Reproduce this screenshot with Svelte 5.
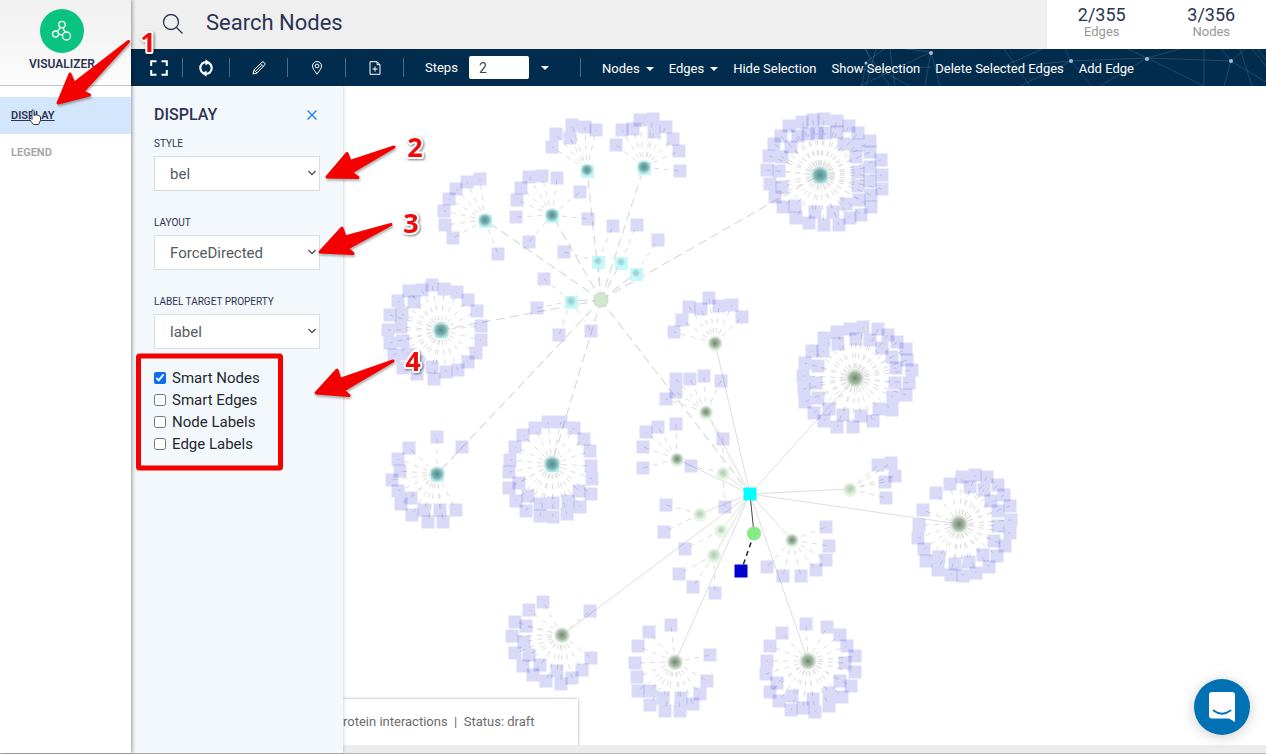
<script lang="ts">
  type Cluster = { x: number; y: number; r: number; kind: 'teal' | 'olive'; leaves: string };

  // Hub position, strength of the hub's dark core, family, and leaf positions.
  const clusters: Cluster[] = [
    { x: 587, y: 170, r: 7, kind: 'teal', leaves: '572,125 585,127 596,130 556,134 570,138 552,147' },
    { x: 644, y: 167, r: 8, kind: 'teal', leaves: '622,130 633,129 640,120 653,119 654,132 666,127 673,139 679,151 680,171 616,145' },
    { x: 485, y: 220, r: 8, kind: 'teal', leaves: '480,179 467,182 456,189 449,199 444,211 445,225 453,238 498,254' },
    { x: 552, y: 215, r: 8, kind: 'teal', leaves: '529,177 542,176 557,178 521,188 517,200 516,217 529,242 580,192 588,219' },
    { x: 598, y: 261, r: 3, kind: 'teal', leaves: '564,252 613,226' },
    { x: 621, y: 262, r: 3, kind: 'teal', leaves: '637,225' },
    { x: 636, y: 273, r: 3, kind: 'teal', leaves: '658,240' },
    { x: 571, y: 301, r: 4, kind: 'teal', leaves: '544,279 537,308 559,335 591,331' },
    { x: 441, y: 330, r: 10, kind: 'teal', leaves: '432,285 409,291 422,290 444,289 457,292 468,300 414,302 398,301 477,311 402,314 390,315 481,326 401,327 388,330 481,340 403,341 390,343 476,353 468,362 458,370 446,372 434,379 432,367 417,374 403,368 394,355 407,354 418,362' },
    { x: 820, y: 175, r: 11, kind: 'teal', leaves: '824,119 813,120 802,122 837,121 789,126 849,126 858,133 781,136 870,141 774,144 791,147 798,136 808,134 817,133 825,133 837,132 844,144 857,145 870,152 856,157 881,160 769,156 782,157 870,167 858,172 882,175 870,181 858,186 882,189 871,195 767,170 779,171 770,184 782,187 775,197 783,207 795,206 871,207 859,200 846,204 815,212 833,212 796,218 809,223 824,225 839,225 850,218 861,215' },
    { x: 437, y: 474, r: 9, kind: 'teal', leaves: '437,437 462,447 409,448 398,459 400,471 392,480 398,491 411,498 401,504 412,515 424,510 440,510 456,510 428,522 443,522' },
    { x: 552, y: 464, r: 10, kind: 'teal', leaves: '548,422 561,422 535,428 574,428 523,435 584,439 515,447 590,451 510,460 591,466 509,472 592,479 519,483 509,488 579,491 591,494 528,496 516,501 540,504 553,503 568,501 580,507 526,511 540,516 553,517 567,514' },
    { x: 715, y: 343, r: 8, kind: 'olive', leaves: '709,298 689,307 701,309 719,306 732,305 742,317 682,320 674,332' },
    { x: 706, y: 412, r: 7, kind: 'olive', leaves: '676,379 690,379 704,376 721,381 676,392 666,399 723,439' },
    { x: 855, y: 378, r: 11, kind: 'olive', leaves: '863,327 850,329 878,329 837,332 824,338 856,339 870,340 888,335 838,344 897,342 882,348 823,351 812,351 906,349 892,357 907,360 805,363 818,366 896,368 912,370 803,376 895,383 909,383 816,383 804,389 906,395 893,397 818,398 805,402 829,409 814,413 843,415 861,416 879,409 892,410 824,421 837,427 853,427 873,421' },
    { x: 562, y: 635, r: 9, kind: 'olive', leaves: '543,602 590,611 529,610 515,622 526,626 512,636 524,642 515,653 529,655 591,658 523,666 540,665 533,675 557,671 582,670 546,681 572,678 561,684' },
    { x: 677, y: 459, r: 7, kind: 'olive', leaves: '676,424 658,427 646,432 643,447 643,468 691,466' },
    { x: 723, y: 473, r: 4, kind: 'olive', leaves: '725,507 691,466 723,439' },
    { x: 700, y: 514, r: 4, kind: 'olive', leaves: '666,505 664,532' },
    { x: 721, y: 530, r: 3, kind: 'olive', leaves: '685,549' },
    { x: 714, y: 555, r: 5, kind: 'olive', leaves: '679,574 693,587 715,593' },
    { x: 792, y: 540, r: 7, kind: 'olive', leaves: '826,527 829,546 826,560 816,570 801,576 783,576 767,567' },
    { x: 850, y: 489, r: 5, kind: 'olive', leaves: '878,465 891,463 895,476 885,482 886,498' },
    { x: 959, y: 524, r: 11, kind: 'olive', leaves: '936,493 950,484 962,477 975,475 987,477 970,487 984,490 998,485 991,501 1004,495 998,511 1010,506 1011,520 998,526 1010,533 994,541 1005,546 997,556 983,555 989,567 969,562 955,564 976,573 963,576 951,575 939,557 938,570 926,561 924,549 918,538 919,525 923,510' },
    { x: 675, y: 662, r: 9, kind: 'olive', leaves: '671,625 649,632 638,646 635,663 710,655 637,677 638,691 650,691 707,681 700,694 663,698 681,698 650,705 665,711 680,711 693,704' },
    { x: 808, y: 661, r: 10, kind: 'olive', leaves: '806,624 827,627 782,633 840,635 770,646 847,646 855,656 767,661 845,663 855,672 766,674 777,683 840,681 851,686 770,692 792,696 813,699 829,693 842,697 779,701 791,710 803,708 815,712 829,706' },
  ];

  const graph = clusters.map((c) => ({
    ...c,
    points: c.leaves.split(' ').map((p) => p.split(',').map(Number)),
  }));
  // A leaf may hang from more than one hub; it is drawn once.
  const leaves = [...new Set(clusters.flatMap((c) => c.leaves.split(' ')))].map((p) => p.split(',').map(Number));
  const root = { x: 601, y: 300 };
  const focus = { x: 750, y: 494 };

  const fields = [
    { id: 'style', label: 'STYLE', options: ['bel'] },
    { id: 'layout', label: 'LAYOUT', options: ['ForceDirected'] },
    { id: 'target', label: 'LABEL TARGET PROPERTY', options: ['label'] },
  ];

  let toggles = $state([
    { label: 'Smart Nodes', on: true },
    { label: 'Smart Edges', on: false },
    { label: 'Node Labels', on: false },
    { label: 'Edge Labels', on: false },
  ]);
  let steps = $state('2');
</script>

<div class="app">
  <aside class="sidebar">
    <div class="brand">
      <span class="logo">
        <svg width="44" height="44" viewBox="0 0 44 44" fill="none" stroke="#fff" stroke-width="1.3">
          <circle cx="22" cy="15.500" r="3.200" />
          <circle cx="15.500" cy="25" r="3" />
          <circle cx="26.500" cy="27" r="4" />
          <path d="M20.600 18.500l-3.500 4M23 18.700l2 4.500M18.500 25.200l4 1" />
        </svg>
      </span>
      <strong>VISUALIZER</strong>
    </div>
    <nav>
      <a class="current" href="#display">DISPLAY</a>
      <a href="#legend">LEGEND</a>
    </nav>
  </aside>

  <div class="main">
    <header class="search">
      <svg width="22" height="22" viewBox="0 0 22 22" fill="none" stroke="#2c3354" stroke-width="1.300">
        <circle cx="9" cy="8" r="7.500" /><path d="M14.500 13.500L20.500 19.500" />
      </svg>
      <input type="text" aria-label="Search Nodes" placeholder="Search Nodes" />
      <div class="stats">
        <div><b>2/355</b><span>Edges</span></div>
        <div><b>3/356</b><span>Nodes</span></div>
      </div>
    </header>

    <div class="toolbar">
      <svg class="net" width="440" height="37" viewBox="826 49 440 37" fill="none" stroke="#8fb3cc" stroke-opacity=".22" aria-hidden="true">
        <path d="M860 86L931 52M931 52L925 86M931 52L940 86M931 52L906 49M865 49L890 86M866 62L884 49M866 62L862 86M876 49L866 86M890 49L895 86M910 86L872 66L866 49M931 67L850 70M1004 49L1030 86M1071 61L1000 68M1000 68L1042 49M1071 61L1065 49M1071 61L1092 86M1071 61L1147 58M1071 61L1020 86M1147 58L1128 49M1147 58L1180 49M1147 58L1231 61M1147 58L1204 86M1147 58L1100 86M1231 61L1224 86M1231 61L1221 49M1231 61L1266 82M1204 49V86M1240 49L1252 86M1231 61L1245 49M1252 49L1266 66M1258 49L1266 60" />
        <g fill="#a5bfd3" stroke="none"><circle cx="931" cy="53" r="2" /><circle cx="1071" cy="61" r="2" /><circle cx="1147" cy="59" r="2" /><circle cx="1231" cy="61" r="2" /><circle cx="866" cy="63" r="1.500" /></g>
      </svg>
      <button class="cell wide" aria-label="Full screen">
        <svg width="18" height="16" viewBox="0 0 18 16" fill="none" stroke="#fff" stroke-width="2"><path d="M1.200 6V1.200H6.500M11.500 1.200h5.300V6M16.800 10v4.800h-5.300M6.500 14.800H1.200V10" /></svg>
      </button>
      <button class="cell mid" aria-label="Refresh">
        <svg width="18" height="18" viewBox="0 0 18 18" fill="none" stroke="#fff" stroke-width="2.200"><path d="M6.500 14.200A6 6 0 0 1 5 4.700Q7 3.100 9.500 3.200M11.500 3.800A6 6 0 0 1 13 13.300Q11 14.900 8.500 14.800" /><path d="M8.500.200L13 3.400 8.500 6.600zM9.500 11.400L5 14.600 9.500 17.800z" fill="#fff" stroke="none" /></svg>
      </button>
      <button class="cell" aria-label="Edit">
        <svg width="14" height="14" viewBox="0 0 14 14" fill="none" stroke="#fff"><path d="M1 13l1-4L10 1.200q1-.9 2 .1l.7.700q.9 1 0 1.900L5 12zM2 9l3 3M8.500 2.800l2.900 2.900M4 10l5.500-5.500" /></svg>
      </button>
      <button class="cell" aria-label="Locate">
        <svg width="12" height="14" viewBox="0 0 12 14" fill="none" stroke="#fff"><path d="M6 13.300C3.500 9.500 1.500 7.500 1.500 5a4.500 4.500 0 0 1 9 0c0 2.500-2 4.500-4.500 8.300z" /><circle cx="6" cy="5" r="1.900" /></svg>
      </button>
      <button class="cell" aria-label="Add page">
        <svg width="12" height="14" viewBox="0 0 12 14" fill="none" stroke="#fff"><path d="M1 .700h7L11 3.700v9.600H1zM8 .700v3h3M6 5.500v5M3.500 8h5" /></svg>
      </button>
      <div class="steps">
        <label for="steps">Steps</label>
        <input id="steps" type="text" bind:value={steps} />
        <button aria-label="Step options"><i class="caret"></i></button>
      </div>
      <div class="actions">
        <button>Nodes<i class="caret"></i></button>
        <button>Edges<i class="caret"></i></button>
        <button>Hide Selection</button>
        <button>Show Selection</button>
        <button>Delete Selected Edges</button>
        <button>Add Edge</button>
      </div>
    </div>

    <div class="workspace">
      <section class="panel" aria-label="Display">
        <div class="title">
          <h2>DISPLAY</h2>
          <button aria-label="Close">
            <svg width="10" height="10" viewBox="0 0 10 10" stroke="#1a82f0" stroke-width="1.400"><path d="M.500.500l9 9M9.500.500l-9 9" /></svg>
          </button>
        </div>
        {#each fields as f}
          <div class="field">
            <label for={f.id}>{f.label}</label>
            <div class="pick">
              <select id={f.id}>
                {#each f.options as o}<option>{o}</option>{/each}
              </select>
              <svg width="8" height="6" viewBox="0 0 8 6" fill="none" stroke="#444" stroke-width="1.200"><path d="M.500 1L4 4.600 7.500 1" /></svg>
            </div>
          </div>
        {/each}
        <div class="toggles">
          {#each toggles as t}
            <label><input type="checkbox" bind:checked={t.on} />{t.label}</label>
          {/each}
        </div>
      </section>

      <div class="canvas">
        <svg class="graph" aria-label="Network graph">
          <defs>
            <radialGradient id="teal"><stop offset="0" stop-color="#437f80" stop-opacity=".9" /><stop offset=".5" stop-color="#5d9696" stop-opacity=".7" /><stop offset="1" stop-color="#9fd0d0" stop-opacity="0" /></radialGradient>
            <radialGradient id="olive"><stop offset="0" stop-color="#667766" stop-opacity=".9" /><stop offset=".5" stop-color="#829782" stop-opacity=".65" /><stop offset="1" stop-color="#b5cdb5" stop-opacity="0" /></radialGradient>
          </defs>
          <g transform="translate(-343 -86)">
            {#each graph as c}
              {#if c.kind === 'teal'}
                <line class="long" x1={root.x} y1={root.y} x2={c.x} y2={c.y} />
              {:else}
                <line class="solid" x1={focus.x} y1={focus.y} x2={c.x} y2={c.y} />
              {/if}
            {/each}
            <line class="long" x1={root.x} y1={root.y} x2={focus.x} y2={focus.y} />
            {#each graph as c}
              {#each c.points as [x, y]}
                <line class="spoke" x1={c.x} y1={c.y} x2={x} y2={y} />
              {/each}
            {/each}
            {#each leaves as [x, y]}
              <rect class="leaf" x={x - 6.5} y={y - 6.5} width="13" height="13" />
            {/each}
            {#each graph as c}
              {#if c.kind === 'teal'}
                <rect class="cyan" x={c.x - 6} y={c.y - 5} width="13" height="13" />
              {:else}
                <circle class="green" cx={c.x} cy={c.y + 1} r="7" />
              {/if}
              <circle cx={c.x} cy={c.y} r={c.r < 6 ? c.r + 2 : c.r} fill="url(#{c.kind})" opacity={c.r < 6 ? 0.4 : 1} />
            {/each}
            <circle cx={root.x} cy={root.y} r="7" fill="#d2e8ce" stroke="#c3d6c0" />
            <path d="M750 494L754 534" stroke="#444" />
            <path d="M754 534L741 571" stroke="#222" stroke-width="1.500" stroke-dasharray="5 4" />
            <rect x="743.500" y="487.500" width="13" height="13" fill="#00ffff" />
            <circle cx="754" cy="533.500" r="7" fill="#86ea86" />
            <rect x="734.500" y="564.500" width="13" height="13" fill="#0000cd" />
          </g>
        </svg>
        <div class="status">rotein interactions&nbsp; |&nbsp; Status: draft</div>
      </div>
    </div>
  </div>

  <button class="chat" aria-label="Open chat">
    <svg width="28" height="32" viewBox="0 0 28 32"><path d="M4 1h20q3 0 3 3v27l-6-3.500H4q-3 0-3-3V4q0-3 3-3z" fill="#fff" /><path d="M5.500 19.500q8.500 6.500 17 0" fill="none" stroke="#0071b2" stroke-width="1.800" stroke-linecap="round" /></svg>
  </button>

  <svg class="notes" aria-hidden="true">
    <g class="arrows">
      <path d="M58 103L70 74L74 83.500L128.500 41.500L82.500 92L89.500 95z" />
      <path d="M327 177L347 153.500L350 161.500L394 147L351 172.500L358 177.500z" />
      <path d="M320 252L342 228L345 237L391 224.500L347 248.500L353 253.500z" />
      <path d="M316 393L337 370L340 379.500L393 361L343 390.500L349 395.500z" />
    </g>
    <rect x="138.500" y="356" width="142" height="112" rx="1" fill="none" stroke="#f40000" stroke-width="5" />
    <g class="digits">
      <text x="148" y="52">1</text>
      <text x="415" y="157">2</text>
      <text x="411" y="233">3</text>
      <text x="413" y="371">4</text>
    </g>
    <path d="M32 110.500q1.500-1.500 2 0v5l1-.500q1.200-.800 2 .300q1.500-.600 2 .700q1.500-.300 1.500 1v3.500l-2 4h-5l-4-5q-.500-1.500 1.500-1l1 1z" fill="#fff" stroke="#223" stroke-width=".9" />
  </svg>
</div>

<style>
  :global(body) {
    margin: 0;
    background: #fff;
  }
  .app {
    position: relative;
    display: flex;
    min-height: 100vh;
    box-sizing: border-box;
    border-bottom: 1px solid #b4b4b4;
    font-family: Roboto, sans-serif;
    color: #2c3354;
  }
  button {
    border: 0;
    padding: 0;
    background: none;
    color: inherit;
    font: inherit;
    cursor: pointer;
  }
  .sidebar {
    position: relative;
    z-index: 3;
    flex: 0 0 131px;
    background: #fff;
    box-shadow: 1px 0 4px rgba(0, 0, 0, 0.4);
  }
  .brand {
    display: flex;
    flex-direction: column;
    align-items: center;
    height: 86px;
    box-sizing: border-box;
    padding: 9px 7px 0 0;
    border-bottom: 1px solid #c4c4c4;
    background: linear-gradient(#f0f0f0, #fcfcfc);
  }
  .logo {
    width: 44px;
    height: 44px;
    border-radius: 50%;
    background: #0bc380;
  }
  .brand strong {
    margin-top: 2px;
    font-size: 12px;
    line-height: 18px;
    font-weight: 600;
  }
  nav {
    padding-top: 11px;
  }
  nav a {
    display: block;
    padding-left: 11px;
    font-size: 11px;
    line-height: 37px;
    font-weight: 600;
    color: #a3a3a3;
    text-decoration: none;
  }
  nav a.current {
    background: #d3e6fb;
    color: #2c3354;
    text-decoration: underline;
  }
  .main {
    flex: 1;
    min-width: 0;
    display: flex;
    flex-direction: column;
  }
  .search {
    display: flex;
    align-items: center;
    height: 49px;
    padding-left: 31px;
    background: #efefef;
  }
  .search input {
    flex: 1;
    min-width: 0;
    margin-left: 22px;
    padding: 0 0 4px;
    border: 0;
    background: none;
    outline: 0;
    font: 22px/28px Roboto, sans-serif;
  }
  .search input::placeholder {
    color: #2c3354;
    opacity: 1;
  }
  .search > svg {
    flex: none;
  }
  .stats {
    flex: 0 0 219px;
    display: grid;
    grid-template-columns: 1fr 1fr;
    align-self: stretch;
    background: #fff;
    text-align: center;
  }
  .stats b,
  .stats span {
    display: block;
  }
  .stats b {
    margin-top: 5px;
    font-size: 18px;
    line-height: 20px;
    font-weight: 400;
  }
  .stats span {
    font-size: 13px;
    line-height: 13px;
    color: #979797;
  }
  .toolbar {
    position: relative;
    display: flex;
    align-items: center;
    height: 37px;
    background: #022c4d;
    color: #fff;
    font-size: 13px;
  }
  .net {
    position: absolute;
    right: 0;
    top: 0;
  }
  .cell {
    display: flex;
    align-items: center;
    justify-content: center;
    flex: 0 0 58px;
    box-sizing: border-box;
    height: 19px;
    border-right: 1px solid #4d6b83;
  }
  .cell.wide {
    flex-basis: 52px;
    padding-left: 4px;
  }
  .cell.mid {
    flex-basis: 47px;
  }
  .steps {
    display: flex;
    align-items: center;
    flex: 0 0 177px;
    box-sizing: border-box;
    height: 19px;
    padding-left: 21px;
    border-right: 1px solid #4d6b83;
  }
  .steps label {
    flex: 0 0 44px;
  }
  .steps input {
    width: 60px;
    height: 23px;
    box-sizing: border-box;
    padding: 0 10px;
    border: 0;
    border-radius: 2px;
    background: #fff;
    color: #444;
    font: 14px Roboto, sans-serif;
  }
  .steps .caret {
    margin-left: 12px;
  }
  .caret {
    display: inline-block;
    margin-left: 6px;
    border: 4px solid transparent;
    border-top-color: #fff;
    border-bottom: 0;
    vertical-align: 2px;
  }
  .actions {
    position: relative;
    display: flex;
    gap: 15px;
    padding: 2px 0 0 21px;
    white-space: nowrap;
  }
  .workspace {
    flex: 1;
    display: flex;
  }
  .panel {
    position: relative;
    z-index: 2;
    flex: 0 0 212px;
    box-sizing: border-box;
    padding: 19px 23px 18px;
    background: #f3f8fd;
    box-shadow: 1px 0 3px rgba(0, 0, 0, 0.16);
  }
  .title {
    display: flex;
    align-items: center;
    justify-content: space-between;
    padding-right: 3px;
    margin-bottom: 10px;
  }
  .title h2 {
    margin: 0;
    font-size: 16px;
    line-height: 20px;
    font-weight: 500;
  }
  .title button {
    display: flex;
  }
  .field {
    margin-bottom: 22px;
  }
  .field label {
    display: block;
    margin-bottom: 3px;
    font-size: 10px;
    line-height: 18px;
  }
  .pick {
    position: relative;
  }
  .pick select {
    display: block;
    width: 100%;
    height: 35px;
    margin-bottom: 23px;
    padding: 0 15px;
    border: 1px solid #d9dde2;
    border-radius: 0;
    background: #fff;
    color: #555b61;
    font: 15px Roboto, sans-serif;
    appearance: none;
  }
  .field .pick select {
    margin-bottom: 0;
  }
  .field + .field {
    padding-top: 1px;
  }
  .pick svg {
    position: absolute;
    right: 4px;
    top: 14px;
    pointer-events: none;
  }
  .toggles {
    margin-top: -4px;
  }
  .toggles label {
    display: flex;
    align-items: center;
    gap: 6px;
    font-size: 15px;
    line-height: 22px;
    color: #24282d;
  }
  .toggles input {
    width: 12px;
    height: 12px;
    margin: 0;
    accent-color: #0a6df0;
  }
  .canvas {
    position: relative;
    flex: 1;
    min-width: 0;
    overflow: hidden;
    border-bottom: 8px solid #ececec;
  }
  .graph {
    position: absolute;
    inset: 0;
    width: 100%;
    height: 100%;
  }
  .long {
    stroke: #dcdadc;
    stroke-width: 1.2;
    stroke-dasharray: 9 5;
  }
  .solid {
    stroke: #dedede;
  }
  .spoke {
    stroke: #dfdcdc;
    stroke-dasharray: 5 5;
  }
  .leaf {
    fill: #0000cd;
    fill-opacity: 0.15;
  }
  .cyan {
    fill: #b8f8f8;
    fill-opacity: 0.8;
  }
  .green {
    fill: #def6de;
    fill-opacity: 0.8;
  }
  .status {
    position: absolute;
    left: 0;
    bottom: 0;
    padding-right: 43px;
    background: #fff;
    box-shadow: 0 0 3px rgba(0, 0, 0, 0.35);
    color: #6b6b6b;
    font-size: 13px;
    line-height: 46px;
    white-space: nowrap;
  }
  .chat {
    position: absolute;
    right: 16px;
    bottom: 18px;
    z-index: 5;
    display: flex;
    align-items: center;
    justify-content: center;
    width: 56px;
    height: 56px;
    border-radius: 50%;
    background: #0071b2;
    box-shadow: 0 2px 14px rgba(0, 0, 0, 0.2);
  }
  .notes {
    position: absolute;
    inset: 0;
    z-index: 4;
    width: 100%;
    height: 100%;
    pointer-events: none;
  }
  .arrows {
    fill: #f40000;
    stroke: #f40000;
    stroke-width: 3;
    stroke-linejoin: round;
    filter: drop-shadow(1px 2px 1px rgba(0, 0, 0, 0.3));
  }
  .digits {
    fill: #ee0a0a;
    stroke: #fff;
    stroke-width: 4;
    stroke-linejoin: round;
    paint-order: stroke;
    font: bold 27px "Open Sans", sans-serif;
    text-anchor: middle;
    filter: drop-shadow(1px 1px 1px rgba(0, 0, 0, 0.5));
  }
</style>
